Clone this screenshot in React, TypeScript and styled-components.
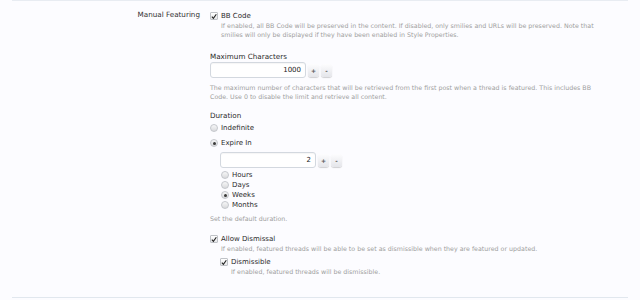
import styled, { createGlobalStyle } from "styled-components";

const GlobalStyle = createGlobalStyle`
  body {
    margin: 0;
    background: #fcfcff;
    font-family: "DejaVu Sans", Verdana, sans-serif;
    color: #2b2b2b;
  }
`;

const DURATION_UNITS = [
  { name: "Hours", checked: false },
  { name: "Days", checked: false },
  { name: "Weeks", checked: true },
  { name: "Months", checked: false },
];

const CheckIcon = () => (
  <svg width="7" height="7" viewBox="0 0 7 7">
    <path d="M1 3.6 L2.8 5.6 L6.2 0.9" fill="none" stroke="#222" strokeWidth="1.3" />
  </svg>
);

const Checkbox = ({ checked }: { checked?: boolean }) => (
  <Box>{checked && <CheckIcon />}</Box>
);

const Radio = ({ checked }: { checked?: boolean }) => (
  <Round>{checked && <Dot />}</Round>
);

const Spinner = ({ value, indent, top }: { value: string; indent?: number; top?: number }) => (
  <SpinRow $indent={indent} $top={top}>
    <TextInput>{value}</TextInput>
    <SpinButton>+</SpinButton>
    <SpinButton>-</SpinButton>
  </SpinRow>
);

const App = () => {
  return (
    <>
      <GlobalStyle />
      <Page>
        <Section>
          <RowLabel>Manual Featuring</RowLabel>
          <Content>
            <OptionRow $top={1}>
              <Checkbox checked />
              <OptionText>BB Code</OptionText>
            </OptionRow>
            <Hint $indent={11}>
              If enabled, all BB Code will be preserved in the content. If disabled, only smilies and URLs will be preserved. Note that
              <br />
              smilies will only be displayed if they have been enabled in Style Properties.
            </Hint>

            <Heading $top={13}>Maximum Characters</Heading>
            <Spinner value="1000" />
            <Hint $top={5}>
              The maximum number of characters that will be retrieved from the first post when a thread is featured. This includes BB
              <br />
              Code. Use 0 to disable the limit and retrieve all content.
            </Hint>

            <Heading $top={10}>Duration</Heading>
            <OptionRow $top={2}>
              <Radio />
              <OptionText>Indefinite</OptionText>
            </OptionRow>
            <OptionRow $top={5}>
              <Radio checked />
              <OptionText>Expire In</OptionText>
            </OptionRow>
            <Spinner value="2" indent={10} top={4} />
            <UnitList>
              {DURATION_UNITS.map((u) => (
                <OptionRow key={u.name}>
                  <Radio checked={u.checked} />
                  <OptionText>{u.name}</OptionText>
                </OptionRow>
              ))}
            </UnitList>
            <Hint $top={4}>Set the default duration.</Hint>

            <OptionRow $top={11}>
              <Checkbox checked />
              <OptionText>Allow Dismissal</OptionText>
            </OptionRow>
            <Hint $indent={11}>
              If enabled, featured threads will be able to be set as dismissible when they are featured or updated.
            </Hint>
            <Nested>
              <OptionRow $top={4}>
                <Checkbox checked />
                <OptionText>Dismissible</OptionText>
              </OptionRow>
              <Hint $indent={11}>If enabled, featured threads will be dismissible.</Hint>
            </Nested>
          </Content>
        </Section>
      </Page>
    </>
  );
};
export default App;

const Page = styled.div`
  height: 300px;
  padding: 0 12px;
  box-sizing: border-box;
`;

const Section = styled.div`
  height: 298px;
  box-sizing: border-box;
  border-top: 1px solid #e8ecf2;
  border-bottom: 1px solid #e1e7ee;
  display: grid;
  grid-template-columns: 188px 1fr;
  column-gap: 10px;
  align-items: start;
  padding-top: 9px;
`;

const RowLabel = styled.div`
  text-align: right;
  font-size: 7.2px;
  line-height: 10px;
  color: #333;
`;

const Content = styled.div`
  display: flex;
  flex-direction: column;
  align-items: flex-start;
`;

const OptionRow = styled.div<{ $top?: number }>`
  display: flex;
  align-items: center;
  height: 10px;
  margin-top: ${(p) => p.$top ?? 0}px;
`;

const OptionText = styled.span`
  font-size: 7px;
  line-height: 10px;
  margin-left: 3px;
  color: #2b2b2b;
`;

const Heading = styled.div<{ $top?: number }>`
  font-size: 7.2px;
  line-height: 10px;
  margin-top: ${(p) => p.$top ?? 0}px;
  color: #2b2b2b;
`;

const Hint = styled.div<{ $top?: number; $indent?: number }>`
  font-size: 6.3px;
  line-height: 9px;
  color: #9e9e9e;
  white-space: nowrap;
  margin-top: ${(p) => p.$top ?? 0}px;
  margin-left: ${(p) => p.$indent ?? 0}px;
`;

const Box = styled.span`
  width: 8px;
  height: 8px;
  box-sizing: border-box;
  border: 1px solid #bfc2c7;
  border-radius: 1px;
  background: linear-gradient(#ffffff, #e6e7ea);
  display: flex;
  align-items: center;
  justify-content: center;
`;

const Round = styled.span`
  width: 8px;
  height: 8px;
  box-sizing: border-box;
  border: 1px solid #c4c7cc;
  border-radius: 50%;
  background: linear-gradient(#f7f7f8, #d9dadd);
  display: flex;
  align-items: center;
  justify-content: center;
`;

const Dot = styled.span`
  width: 3px;
  height: 3px;
  border-radius: 50%;
  background: #3a3a3a;
`;

const SpinRow = styled.div<{ $indent?: number; $top?: number }>`
  display: flex;
  align-items: center;
  gap: 2px;
  margin-left: ${(p) => p.$indent ?? 0}px;
  margin-top: ${(p) => p.$top ?? 0}px;
`;

const TextInput = styled.div`
  width: 96px;
  height: 16px;
  box-sizing: border-box;
  border: 1px solid #d3d8df;
  border-radius: 3px;
  background: #fff;
  box-shadow: inset 0 1px 1px rgba(0, 0, 0, 0.04);
  font-size: 7px;
  line-height: 14px;
  text-align: right;
  padding-right: 4px;
  color: #222;
`;

const SpinButton = styled.div`
  width: 11px;
  height: 13px;
  box-sizing: border-box;
  border-radius: 3px;
  background: linear-gradient(#fdfdfe, #e4e5ea);
  box-shadow: 0 1px 1px rgba(0, 0, 0, 0.18);
  font-size: 6px;
  font-weight: bold;
  line-height: 13px;
  text-align: center;
  color: #555;
`;

const UnitList = styled.div`
  display: flex;
  flex-direction: column;
  margin-left: 11px;
  margin-top: 2px;
`;

const Nested = styled.div`
  display: flex;
  flex-direction: column;
  margin-left: 10px;
`;
